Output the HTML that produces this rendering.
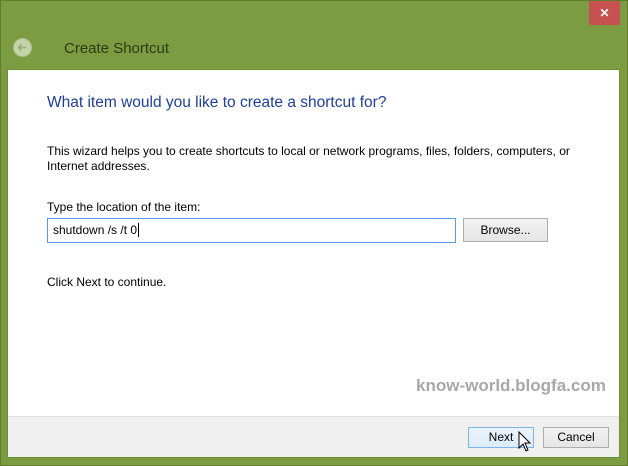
<!DOCTYPE html>
<html><head><style>
*{margin:0;padding:0;box-sizing:border-box}
body{width:628px;height:466px;background:#7b9c40;position:relative;overflow:hidden;font-family:"Liberation Sans",sans-serif;font-size:12px;color:#000}
.frame{position:absolute;left:0;top:0;width:628px;height:466px;border:1px solid #5f7d2c}
.close{position:absolute;left:589px;top:1px;width:31px;height:24px;background:#c75050;color:#fff;text-align:center;font-size:12px;line-height:24px;font-weight:bold}
.back{position:absolute;left:13px;top:38px;width:19px;height:19px;border-radius:50%;background:#c4d4a6;border:1px solid #aebf8e}
.title{position:absolute;left:64px;top:40px;font-size:15px;color:#2b3a14}
.panel{position:absolute;left:7px;top:69px;width:613px;height:389px;background:#fff;border:1px solid #6f8f36}
.foot{position:absolute;left:0;bottom:0;width:100%;height:41px;background:#f0f0f0;border-top:1px solid #dfdfdf}
.h{position:absolute;left:39px;top:24px;font-size:15.5px;color:#1e3f99}
.p{position:absolute;left:39px;font-size:12px}
.inp{position:absolute;left:39px;top:148px;width:409px;height:25px;border:1px solid #569de5;padding:4px 5px;font-size:12px}
.btn{position:absolute;height:24px;border:1px solid #adadad;background:linear-gradient(#f2f2f2,#e5e5e5);text-align:center;line-height:22px;font-size:12px}
.wm{position:absolute;left:408px;top:306px;font-size:17px;font-weight:bold;color:#a8a8a8}
</style></head><body>
<div class="frame"></div>
<div class="close">✕</div>
<div class="back"><svg width="17" height="17" viewBox="0 0 17 17"><path d="M12.5 8.5H4.5M7.5 5.5L4.5 8.5 7.5 11.5" stroke="#9aab7e" stroke-width="1.6" fill="none"/></svg></div>
<div class="title">Create Shortcut</div>
<div class="panel">
<div class="h">What item would you like to create a shortcut for?</div>
<div class="p" style="top:74px;line-height:15px">This wizard helps you to create shortcuts to local or network programs, files, folders, computers, or<br>Internet addresses.</div>
<div class="p" style="top:130px">Type the location of the item:</div>
<div class="inp">shutdown /s /t 0<span style="border-left:1px solid #000;margin-left:1px"></span></div>
<div class="btn" style="left:455px;top:148px;width:85px">Browse...</div>
<div class="p" style="top:205px">Click Next to continue.</div>
<div class="wm">know-world.blogfa.com</div>
<div class="foot">
<div class="btn" style="left:460px;top:10px;width:66px;height:21px;line-height:19px;border-color:#7eb4ea;background:linear-gradient(#ecf4fc,#dcecfc)">Next</div>
<div class="btn" style="left:535px;top:10px;width:66px;height:21px;line-height:19px">Cancel</div>
<svg style="position:absolute;left:510px;top:14px" width="14" height="22" viewBox="0 0 14 22"><path d="M1 1V17L5 13L8 20L10 19L7 12H12Z" fill="#fff" stroke="#000" stroke-width="1"/></svg>
</div>
</div>
</body></html>
